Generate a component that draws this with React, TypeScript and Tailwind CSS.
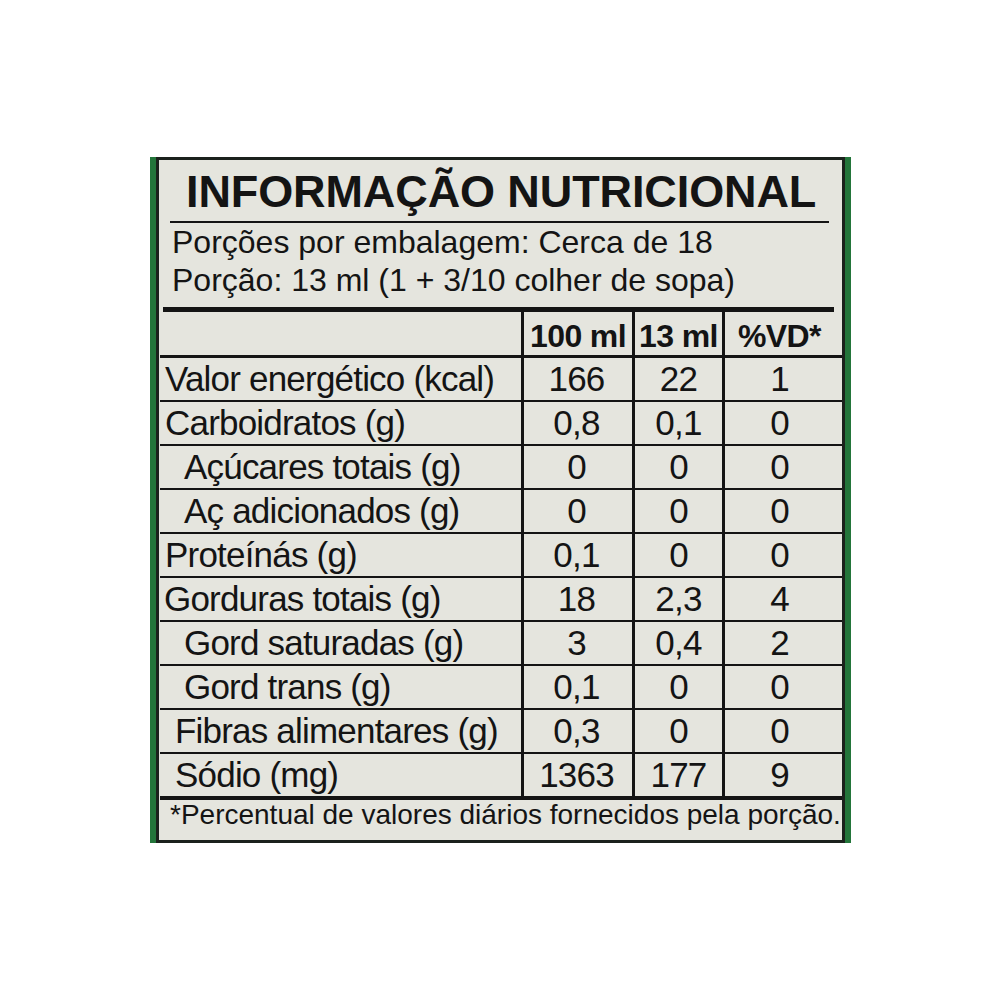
const rows = [
  { label: 'Valor energético (kcal)', indent: 'pl-[5px]', a: '166', b: '22', c: '1' },
  { label: 'Carboidratos (g)', indent: 'pl-[5px]', a: '0,8', b: '0,1', c: '0' },
  { label: 'Açúcares totais (g)', indent: 'pl-[24px]', a: '0', b: '0', c: '0' },
  { label: 'Aç adicionados (g)', indent: 'pl-[24px]', a: '0', b: '0', c: '0' },
  { label: 'Proteínás (g)', indent: 'pl-[5px]', a: '0,1', b: '0', c: '0' },
  { label: 'Gorduras totais (g)', indent: 'pl-[4px]', a: '18', b: '2,3', c: '4' },
  { label: 'Gord saturadas (g)', indent: 'pl-[24px]', a: '3', b: '0,4', c: '2' },
  { label: 'Gord trans (g)', indent: 'pl-[24px]', a: '0,1', b: '0', c: '0' },
  { label: 'Fibras alimentares (g)', indent: 'pl-[15px]', a: '0,3', b: '0', c: '0' },
  { label: 'Sódio (mg)', indent: 'pl-[15px]', a: '1363', b: '177', c: '9' },
];

export default function App() {
  return (
    <div className="w-[1000px] h-[1000px] bg-white pt-[157px] pl-[150px] font-['Liberation_Sans',Arial,sans-serif] text-[#141414]">
      <div className="w-[701px] h-[686px] border-l-[6px] border-r-[6px] border-[#23753a]">
        <div className="h-full border-[3px] border-[#1b211c] bg-[#e5e5de] overflow-hidden">
          <h1 className="pt-[9px] pl-[27px] text-[45px] leading-[45px] font-bold tracking-[-0.1px] whitespace-nowrap">
            INFORMAÇÃO NUTRICIONAL
          </h1>
          <div className="mt-[7px] ml-[11px] mr-[13px] h-[2px] bg-[#141414]" />
          <div className="pl-[13px] text-[32px] leading-[38px] whitespace-nowrap">
            <p>Porções por embalagem: Cerca de 18</p>
            <p>Porção: 13 ml (1 + 3/10 colher de sopa)</p>
          </div>
          <div className="mt-[8px] ml-[4px] mr-[8px] h-[5px] bg-[#141414]" />

          <div className="ml-[1px]">
            <div className="grid grid-cols-[361px_111px_90px_1fr] h-[46px] border-b-[3px] border-[#141414] text-[32px] font-bold tracking-[-0.6px]">
              <div />
              <div className="border-l-[3px] border-[#141414] flex items-center justify-center">100 ml</div>
              <div className="border-l-[3px] border-[#141414] flex items-center justify-center">13 ml</div>
              <div className="border-l-[3px] border-[#141414] flex items-center justify-center pr-[8px]">%VD*</div>
            </div>
            {rows.map((r, i) => (
              <div
                key={r.label}
                className={`grid grid-cols-[361px_111px_90px_1fr] text-[35px] leading-[40px] tracking-[-0.8px] ${
                  i === rows.length - 1 ? 'h-[46px] border-b-[4px]' : 'h-[44px] border-b-[2px]'
                } border-[#141414]`}
              >
                <div className={`${r.indent} flex items-center whitespace-nowrap`}>{r.label}</div>
                <div className="border-l-[3px] border-[#141414] flex items-center justify-center pr-[3px]">{r.a}</div>
                <div className="border-l-[3px] border-[#141414] flex items-center justify-center">{r.b}</div>
                <div className="border-l-[3px] border-[#141414] flex items-center justify-center pr-[8px]">{r.c}</div>
              </div>
            ))}
          </div>

          <p className="pt-[1px] pl-[11px] text-[28px] leading-[28px] whitespace-nowrap">
            *Percentual de valores diários fornecidos pela porção.
          </p>
        </div>
      </div>
    </div>
  );
}
